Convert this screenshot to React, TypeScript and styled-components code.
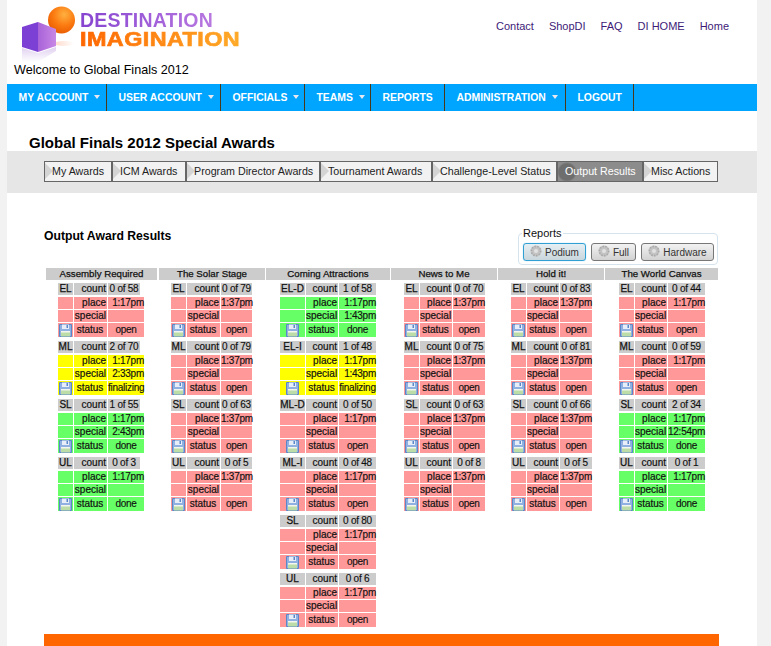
import styled, { createGlobalStyle } from 'styled-components'

const GlobalStyle = createGlobalStyle`
  html, body {
    margin: 0;
    padding: 0;
    background: #f2f2f2;
    font-family: "Liberation Sans", Arial, sans-serif;
    color: #000;
  }
`

const Page = styled.div`
  width: 750px;
  height: 646px;
  margin-left: 7px;
  background: #fff;
  overflow: hidden;
`

const Header = styled.header`
  height: 84px;
  display: flex;
  justify-content: space-between;
`

const Brand = styled.div`
  padding-left: 7px;
  display: flex;
  flex-direction: column;
`

const LogoWrap = styled.div`
  position: relative;
  width: 240px;
  height: 62px;
`

const LogoArt = styled.svg`
  position: absolute;
  left: 7px;
  top: 5px;
`

const LogoTop = styled.div`
  position: absolute;
  left: 66px;
  top: 11px;
  font-size: 19.5px;
  line-height: 18px;
  letter-spacing: 0.2px;
  font-weight: bold;
  white-space: nowrap;
  background: linear-gradient(90deg, #8644d0, #b878e0);
  -webkit-background-clip: text;
  background-clip: text;
  color: transparent;
`

const LogoBottom = styled.div`
  position: absolute;
  left: 66px;
  top: 31px;
  font-size: 19.5px;
  line-height: 16px;
  letter-spacing: 0.35px;
  font-weight: bold;
  white-space: nowrap;
  transform: scaleX(1.2);
  transform-origin: left center;
  -webkit-text-stroke: 0.7px transparent;
  background: linear-gradient(90deg, #ff6600, #ffaa28);
  -webkit-background-clip: text;
  background-clip: text;
  color: transparent;
`

const Welcome = styled.div`
  font-size: 12.6px;
  line-height: 14px;
  padding-top: 1px;
`

const TopLinks = styled.nav`
  display: flex;
  gap: 15px;
  padding: 19px 28px 0 0;
  font-size: 11px;
  line-height: 14px;
`

const TopLink = styled.a`
  color: #3d1a78;
`

const MenuBar = styled.nav`
  height: 27px;
  background: #00a5ff;
  display: flex;
`

const MenuItem = styled.div<{ $w: number }>`
  width: ${p => p.$w}px;
  border-right: 1px solid #4a3a1a;
  box-sizing: border-box;
  display: flex;
  align-items: center;
  padding-left: 11.5px;
  color: #fff;
  font-size: 10.4px;
  font-weight: bold;
  white-space: nowrap;
`

const Caret = styled.span`
  width: 0;
  height: 0;
  margin-left: 6px;
  margin-top: -2px;
  border-left: 3.5px solid transparent;
  border-right: 3.5px solid transparent;
  border-top: 4px solid #e8e8f0;
`

const Title = styled.h1`
  margin: 0;
  padding: 23px 0 0 22px;
  height: 40px;
  box-sizing: border-box;
  font-size: 15px;
  line-height: 17px;
  font-weight: bold;
`

const TabBar = styled.div`
  height: 42px;
  background: #e6e6e6;
  padding: 10px 0 0 37px;
  box-sizing: border-box;
  display: flex;
`

const Tab = styled.div<{ $w: number; $active?: boolean }>`
  position: relative;
  width: ${p => p.$w}px;
  height: 21px;
  box-sizing: border-box;
  border: 1px solid #666;
  background: ${p => (p.$active ? 'radial-gradient(circle at 9px 10px, #6e6e6e 8px, #8c8c8c 10px)' : '#f2f2f2')};
  color: ${p => (p.$active ? '#fff' : '#222')};
  font-size: 10.7px;
  line-height: 19px;
  padding-left: 7px;
  white-space: nowrap;
  &::before {
    content: ${p => (p.$active ? 'none' : "''")};
    position: absolute;
    left: 0;
    top: 1px;
    border-top: 8px solid transparent;
    border-bottom: 8px solid transparent;
    border-left: 8px solid #d4d4d4;
  }
  span {
    position: relative;
  }
`

const Intro = styled.div`
  display: flex;
  justify-content: space-between;
  align-items: flex-start;
  padding: 33px 39px 0 37px;
  height: 75px;
  box-sizing: border-box;
`

const Heading = styled.h2`
  margin: 0;
  padding-top: 3px;
  font-size: 12.2px;
  line-height: 14px;
  font-weight: bold;
`

const ReportsBox = styled.fieldset`
  margin: 2px 0 0;
  padding: 4px 3px 0 4px;
  width: 200px;
  height: 37px;
  box-sizing: border-box;
  border: 1px solid #d5e3ee;
  border-radius: 4px;
  display: flex;
  gap: 5px;
`

const ReportsLegend = styled.legend`
  font-size: 11px;
  line-height: 11px;
  padding: 0 1px;
  margin-left: -1px;
  color: #111;
`

const ReportButton = styled.button<{ $w: number; $focus?: boolean }>`
  width: ${p => p.$w}px;
  height: 18px;
  padding: 0;
  box-sizing: border-box;
  display: flex;
  align-items: center;
  justify-content: center;
  gap: 3px;
  border: 1px solid ${p => (p.$focus ? '#2f9fd4' : '#777')};
  box-shadow: ${p => (p.$focus ? '0 0 1px #6cc0e8' : 'none')};
  border-radius: 3px;
  background: ${p => (p.$focus ? 'linear-gradient(#e6eff3, #c9d6dc)' : 'linear-gradient(#f2f2f2, #d2d2d2)')};
  font-family: inherit;
  font-size: 10px;
  color: #333;
  svg {
    margin-top: -3px;
  }
`

const Board = styled.div`
  margin-left: 39px;
  display: grid;
  grid-template-columns: 113px 107px 125px 107px 107px 113px;
  height: 366px;
`

const Column = styled.section``

const ColumnTitle = styled.div`
  height: 12px;
  margin-right: 1px;
  background: #ccc;
  font-size: 9.7px;
  line-height: 12px;
  -webkit-text-stroke: 0.25px;
  text-align: center;
  color: #111;
  section:first-child > & {
    margin-right: 2px;
  }
  section:last-child > & {
    margin-right: 0;
  }
`

const Blocks = styled.div<{ $left: number }>`
  padding: 3px 0 0 ${p => p.$left}px;
  display: flex;
  flex-direction: column;
`

const Block = styled.div<{ $cols: string }>`
  display: grid;
  grid-template-columns: ${p => p.$cols};
  grid-template-rows: 13px 12px 12px 14px;
  gap: 1px;
  margin-bottom: 4px;
  font-size: 10px;
  line-height: 12px;
  -webkit-text-stroke: 0.15px;
  & > :nth-child(-n + 3) {
    height: 12px;
  }
  & > :nth-child(n + 10) {
    line-height: 14px;
  }
`

const Cell = styled.div<{ $bg: string; $align?: string; $w?: number }>`
  background: ${p => p.$bg};
  text-align: ${p => p.$align || 'center'};
  width: ${p => (p.$w ? `${p.$w}px` : 'auto')};
  letter-spacing: -0.25px;
  white-space: nowrap;
  color: #111;
`

const LabelCell = styled(Cell)`
  padding-right: 1px;
  letter-spacing: 0;
  -webkit-text-stroke: 0.2px;
`

const LevelCell = styled(Cell)`
  letter-spacing: 0;
  -webkit-text-stroke: 0.25px;
`

const IconCell = styled(Cell)`
  display: flex;
  align-items: center;
  justify-content: center;
`

const Footer = styled.div`
  margin-left: 37px;
  width: 675px;
  height: 12px;
  background: #ff6600;
`

const FloppyIcon = () => (
  <svg width="13" height="13" viewBox="0 0 13 13">
    <rect x="0" y="0" width="13" height="13" rx="1" fill="#5b86c8" />
    <rect x="1" y="1" width="11" height="11" fill="#8fb0e0" />
    <rect x="3" y="0.5" width="7" height="4.5" fill="#e8eef8" />
    <rect x="7.5" y="1" width="1.5" height="3" fill="#5b86c8" />
    <rect x="2" y="7" width="9" height="5.5" fill="#bcdca8" />
    <rect x="2" y="7" width="9" height="1.5" fill="#f2f6ee" />
  </svg>
)

const GearIcon = () => (
  <svg width="12" height="12" viewBox="0 0 12 12">
    <circle cx="6" cy="6" r="5.5" fill="#c4c4c4" />
    <circle cx="6" cy="6" r="4.6" fill="none" stroke="#a8a8a8" strokeWidth="1.6" strokeDasharray="1.4 1.4" />
    <circle cx="6" cy="6" r="2" fill="#e2e2e2" />
  </svg>
)

const Logo = () => (
  <LogoWrap>
    <LogoArt width="70" height="58" viewBox="0 0 70 58">
      <defs>
        <radialGradient id="ball" cx="0.6" cy="0.3" r="0.75">
          <stop offset="0" stopColor="#ffb040" />
          <stop offset="0.55" stopColor="#fb7a10" />
          <stop offset="1" stopColor="#e85a00" />
        </radialGradient>
        <linearGradient id="cubeSide" x1="0" x2="1" y1="0" y2="0">
          <stop offset="0" stopColor="#a862d8" />
          <stop offset="1" stopColor="#c888e6" />
        </linearGradient>
        <linearGradient id="shine" x1="0" x2="1" y1="0" y2="0">
          <stop offset="0" stopColor="#ffd8c8" />
          <stop offset="1" stopColor="#fff" />
        </linearGradient>
        <linearGradient id="reflect" x1="0" x2="0" y1="0" y2="1">
          <stop offset="0" stopColor="#e0d0f0" />
          <stop offset="1" stopColor="#fff" />
        </linearGradient>
      </defs>
      <ellipse cx="43" cy="38.5" rx="10" ry="2.5" fill="url(#shine)" />
      <circle cx="40.5" cy="15" r="13.5" fill="url(#ball)" />
      <polygon points="1,22 17,17 17,47 1,42" fill="#7d40d4" />
      <polygon points="17,17 35,24 35,41 17,47" fill="url(#cubeSide)" />
      <polygon points="1,43 17,48 35,42 35,46 17,57 1,57" fill="url(#reflect)" />
    </LogoArt>
    <LogoTop>DESTINATION</LogoTop>
    <LogoBottom>IMAGINATION</LogoBottom>
  </LogoWrap>
)

type Level = {
  name: string
  count: string
  place: string
  special: string
  status: 'open' | 'done' | 'finalizing'
}

const colours = { open: '#ff9999', done: '#66ff66', finalizing: '#ffff00' }

const L = (name: string, count: string, place: string, special: string, status: Level['status']): Level => ({
  name,
  count,
  place,
  special,
  status,
})

const columns: { title: string; left: number; cols: string; countW?: number; levels: Level[] }[] = [
  {
    title: 'Assembly Required',
    left: 12,
    cols: '15px 33px 36px',
    countW: 32,
    levels: [
      L('EL', '0 of 58', '1:17pm', '', 'open'),
      L('ML', '2 of 70', '1:17pm', '2:33pm', 'finalizing'),
      L('SL', '1 of 55', '1:17pm', '2:43pm', 'done'),
      L('UL', '0 of 3', '1:17pm', '', 'done'),
    ],
  },
  {
    title: 'The Solar Stage',
    left: 12,
    cols: '15px 33px 31px',
    levels: [
      L('EL', '0 of 79', '1:37pm', '', 'open'),
      L('ML', '0 of 79', '1:37pm', '', 'open'),
      L('SL', '0 of 63', '1:37pm', '', 'open'),
      L('UL', '0 of 5', '1:37pm', '', 'open'),
    ],
  },
  {
    title: 'Coming Attractions',
    left: 14,
    cols: '25px 32px 37px',
    levels: [
      L('EL-D', '1 of 58', '1:17pm', '1:43pm', 'done'),
      L('EL-I', '1 of 48', '1:17pm', '1:43pm', 'finalizing'),
      L('ML-D', '0 of 50', '1:17pm', '', 'open'),
      L('ML-I', '0 of 48', '1:17pm', '', 'open'),
      L('SL', '0 of 80', '1:17pm', '', 'open'),
      L('UL', '0 of 6', '1:17pm', '', 'open'),
    ],
  },
  {
    title: 'News to Me',
    left: 13,
    cols: '15px 32px 32px',
    levels: [
      L('EL', '0 of 70', '1:37pm', '', 'open'),
      L('ML', '0 of 75', '1:37pm', '', 'open'),
      L('SL', '0 of 63', '1:37pm', '', 'open'),
      L('UL', '0 of 8', '1:37pm', '', 'open'),
    ],
  },
  {
    title: 'Hold it!',
    left: 13,
    cols: '15px 32px 32px',
    levels: [
      L('EL', '0 of 83', '1:37pm', '', 'open'),
      L('ML', '0 of 81', '1:37pm', '', 'open'),
      L('SL', '0 of 66', '1:37pm', '', 'open'),
      L('UL', '0 of 5', '1:37pm', '', 'open'),
    ],
  },
  {
    title: 'The World Canvas',
    left: 14,
    cols: '15px 32px 37px',
    levels: [
      L('EL', '0 of 44', '1:17pm', '', 'open'),
      L('ML', '0 of 59', '1:17pm', '', 'open'),
      L('SL', '2 of 34', '1:17pm', '12:54pm', 'done'),
      L('UL', '0 of 1', '1:17pm', '', 'done'),
    ],
  },
]

const menu = [
  { label: 'MY ACCOUNT', w: 100, caret: true },
  { label: 'USER ACCOUNT', w: 114, caret: true },
  { label: 'OFFICIALS', w: 84, caret: true },
  { label: 'TEAMS', w: 66, caret: true },
  { label: 'REPORTS', w: 74 },
  { label: 'ADMINISTRATION', w: 121, caret: true },
  { label: 'LOGOUT', w: 68 },
]

const tabs = [
  { label: 'My Awards', w: 68 },
  { label: 'ICM Awards', w: 74 },
  { label: 'Program Director Awards', w: 134 },
  { label: 'Tournament Awards', w: 112 },
  { label: 'Challenge-Level Status', w: 125 },
  { label: 'Output Results', w: 86, active: true },
  { label: 'Misc Actions', w: 75 },
]

const App = () => (
  <>
    <GlobalStyle />
    <Page>
      <Header>
        <Brand>
          <Logo />
          <Welcome>Welcome to Global Finals 2012</Welcome>
        </Brand>
        <TopLinks>
          {['Contact', 'ShopDI', 'FAQ', 'DI HOME', 'Home'].map(t => (
            <TopLink key={t}>{t}</TopLink>
          ))}
        </TopLinks>
      </Header>

      <MenuBar>
        {menu.map(m => (
          <MenuItem key={m.label} $w={m.w}>
            {m.label}
            {m.caret && <Caret />}
          </MenuItem>
        ))}
      </MenuBar>

      <Title>Global Finals 2012 Special Awards</Title>

      <TabBar>
        {tabs.map(t => (
          <Tab key={t.label} $w={t.w} $active={t.active}>
            <span>{t.label}</span>
          </Tab>
        ))}
      </TabBar>

      <Intro>
        <Heading>Output Award Results</Heading>
        <ReportsBox>
          <ReportsLegend>Reports</ReportsLegend>
          <ReportButton $w={63} $focus>
            <GearIcon />
            Podium
          </ReportButton>
          <ReportButton $w={45}>
            <GearIcon />
            Full
          </ReportButton>
          <ReportButton $w={73}>
            <GearIcon />
            Hardware
          </ReportButton>
        </ReportsBox>
      </Intro>

      <Board>
        {columns.map(col => (
          <Column key={col.title}>
            <ColumnTitle>{col.title}</ColumnTitle>
            <Blocks $left={col.left}>
              {col.levels.map(l => {
                const bg = colours[l.status]
                return (
                  <Block key={l.name} $cols={col.cols}>
                    <LevelCell $bg="#ccc">{l.name}</LevelCell>
                    <LabelCell $bg="#ccc" $align="right">count</LabelCell>
                    <Cell $bg="#ccc" $w={col.countW}>{l.count}</Cell>
                    <Cell $bg={bg} />
                    <LabelCell $bg={bg} $align="right">place</LabelCell>
                    <Cell $bg={bg} $align="right">{l.place}</Cell>
                    <Cell $bg={bg} />
                    <LabelCell $bg={bg} $align="right">special</LabelCell>
                    <Cell $bg={bg} $align="right">{l.special}</Cell>
                    <IconCell $bg={bg}>
                      <FloppyIcon />
                    </IconCell>
                    <LabelCell $bg={bg}>status</LabelCell>
                    <Cell $bg={bg}>{l.status}</Cell>
                  </Block>
                )
              })}
            </Blocks>
          </Column>
        ))}
      </Board>

      <Footer />
    </Page>
  </>
)

export default App
